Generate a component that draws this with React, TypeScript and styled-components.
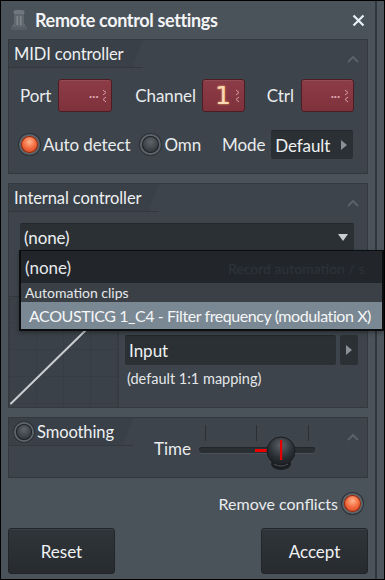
import React from "react";
import styled, { createGlobalStyle } from "styled-components";

const Global = createGlobalStyle`
  html, body { margin: 0; padding: 0; background: #000; }
  body { font-family: Lato, "Open Sans", sans-serif; }
  * { box-sizing: border-box; }
`;

const Window = styled.div`
  width: 385px;
  height: 580px;
  border: 1px solid #000;
  background: #4a525a;
  display: flex;
  color: #e9ecee;
  overflow: hidden;
`;

const Main = styled.div`
  flex: 1;
  display: flex;
  flex-direction: column;
  padding: 0 7px 0 7px;
  border-right: 2px solid #30363b;
`;

const RightEdge = styled.div`
  width: 7px;
  background: #4d555d;
`;

const TitleBar = styled.div`
  height: 38px;
  display: flex;
  align-items: center;
  gap: 6px;
  padding-left: 1px;
`;

const Title = styled.div`
  flex: 1;
  font-weight: 700;
  font-size: 18px;
  letter-spacing: -0.35px;
  color: #f3f4f5;
`;

const Close = styled.div`
  width: 24px;
  display: flex;
  justify-content: center;
  margin-right: -2px;
`;

const Panel = styled.div<{ $h: number; $row?: boolean }>`
  height: ${(p) => p.$h}px;
  background: #3d444b;
  border: 1px solid #33393f;
  display: flex;
  flex-direction: ${(p) => (p.$row ? "row" : "column")};
  align-items: ${(p) => (p.$row ? "flex-start" : "stretch")};
  position: relative;
`;

const Header = styled.div`
  height: 28px;
  display: flex;
  align-items: stretch;
  flex: none;
`;

const Tab = styled.div<{ $w: number }>`
  width: ${(p) => p.$w}px;
  height: 28px;
  flex: none;
  background: linear-gradient(to bottom right, #394047 50%, transparent 50.5%) right / 10px 100% no-repeat,
    linear-gradient(#394047, #394047) left / calc(100% - 10px) 100% no-repeat;
  border-bottom: 1px solid #32383e;
  display: flex;
  align-items: center;
  gap: 3px;
  padding-left: 5px;
  font-size: 16.5px;
  letter-spacing: -0.1px;
  color: #eef0f2;
`;

const Chevron = styled.div`
  position: absolute;
  right: 8px;
  top: 7px;
`;

const Gap = styled.div<{ $h: number }>`
  height: ${(p) => p.$h}px;
  flex: none;
`;

const Row = styled.div<{ $pl?: number }>`
  display: flex;
  align-items: center;
  padding-left: ${(p) => p.$pl ?? 11}px;
  font-size: 17px;
  letter-spacing: -0.1px;
`;

const Label = styled.span<{ $ml?: number; $mr?: number }>`
  margin-left: ${(p) => p.$ml ?? 0}px;
  margin-right: ${(p) => p.$mr ?? 0}px;
  white-space: nowrap;
`;

const Spin = styled.div<{ $w: number }>`
  width: ${(p) => p.$w}px;
  height: 33px;
  background: linear-gradient(#8d3c46, #7e323c);
  border: 1px solid #4e1d24;
  border-radius: 3px;
  box-shadow: inset 0 1px 0 rgba(255, 255, 255, 0.08);
  display: flex;
  align-items: center;
  justify-content: flex-end;
  padding-right: 4px;
  gap: 4px;
`;

const Dashes = styled.span`
  font-size: 14px;
  line-height: 1;
  color: #dba6ad;
  letter-spacing: -0.5px;
`;

const Digit = styled.span`
  font-size: 25px;
  line-height: 1;
  color: #f7d9b3;
  font-family: "DejaVu Sans", sans-serif;
  text-shadow: 0 0 2px #ffb060;
`;

const Radio = styled.div<{ $on?: boolean; $size?: number }>`
  width: ${(p) => p.$size ?? 21}px;
  height: ${(p) => p.$size ?? 21}px;
  border-radius: 50%;
  flex: none;
  background: #5b636b;
  padding: 2px;
  box-shadow: 0 0 0 1px #2d3237;
  &::after {
    content: "";
    display: block;
    width: 100%;
    height: 100%;
    border-radius: 50%;
    background: ${(p) =>
      p.$on
        ? "radial-gradient(circle at 50% 35%, #ffb58f 0%, #f46b3e 45%, #c23a1a 100%)"
        : "radial-gradient(circle at 50% 35%, #5e6468 0%, #3a3f44 60%, #2a2e32 100%)"};
    box-shadow: inset 0 0 0 1px ${(p) => (p.$on ? "#8a2a10" : "#202427")};
  }
`;

const Select = styled.div<{ $w?: number; $h?: number }>`
  ${(p) => (p.$w ? `width: ${p.$w}px;` : "flex: 1;")}
  height: ${(p) => p.$h ?? 29}px;
  background: #2b3035;
  border-top: 1px solid #24282c;
  border-radius: 2px;
  display: flex;
  align-items: center;
  padding-left: 4px;
  padding-right: 6px;
  font-size: 17px;
  color: #eef0f2;
  justify-content: space-between;
`;

const InputRow = styled.div`
  display: flex;
  gap: 4px;
`;

const ArrowBox = styled.div`
  width: 18px;
  height: 30px;
  background: #2b3035;
  border-radius: 2px;
  display: flex;
  align-items: center;
  justify-content: center;
`;

const Popup = styled.div`
  position: absolute;
  left: 10px;
  top: 66px;
  width: 365px;
  border: 2px solid #0b0d0f;
  border-top-width: 1px;
  background: #23272c;
  z-index: 2;
  box-shadow: 0 2px 4px rgba(0, 0, 0, 0.3);
`;

const PopRow = styled.div<{ $kind: "item" | "head" | "sel" }>`
  height: ${(p) => (p.$kind === "item" ? 32 : p.$kind === "head" ? 19 : 27)}px;
  display: flex;
  align-items: center;
  padding-left: ${(p) => (p.$kind === "sel" ? 8 : 4)}px;
  font-size: ${(p) => (p.$kind === "head" ? 14 : p.$kind === "sel" ? 16 : 17)}px;
  letter-spacing: ${(p) => (p.$kind === "sel" ? "-0.42px" : "0")};
  background: ${(p) =>
    p.$kind === "item" ? "#22262b" : p.$kind === "head" ? "#3b4046" : "#7a8893"};
  color: ${(p) => (p.$kind === "sel" ? "#f4f6f7" : "#e6e9eb")};
  white-space: nowrap;
  position: relative;
`;

const Ghost = styled.span`
  position: absolute;
  left: 207px;
  top: 9px;
  font-size: 14px;
  color: #2e3338;
`;

const MapArea = styled.div`
  flex: 1;
  display: flex;
  border-top: 1px solid #33393f;
`;

const Graph = styled.div`
  width: 110px;
  border-right: 1px solid #343a40;
  background-color: #3a4148;
  background-image: linear-gradient(#363d44 1px, transparent 1px),
    linear-gradient(90deg, #363d44 1px, transparent 1px);
  background-size: 27px 27px;
  background-position: 0 -2px;
  display: flex;
  align-items: flex-end;
`;

const MapSide = styled.div`
  flex: 1;
  display: flex;
  flex-direction: column;
  padding: 38px 9px 0 6px;
  gap: 5px;
`;

const Note = styled.div`
  font-size: 14.5px;
  padding-left: 2px;
  color: #e4e7e9;
`;

const TimeGroup = styled.div`
  display: flex;
  align-items: flex-start;
  margin-left: 21px;
  margin-top: 7px;
  font-size: 17px;
`;

const TimeLabel = styled.span`
  margin-top: 13px;
`;

const SliderWrap = styled.div`
  width: 120px;
  height: 52px;
  position: relative;
  margin-left: 8px;
`;

const Track = styled.div`
  position: absolute;
  left: 0;
  right: 4px;
  top: 22px;
  height: 6px;
  border-radius: 3px;
  background: #2a2f34;
  box-shadow: inset 0 1px 0 #22262a, 0 1px 0 #4a5158;
`;

const Tick = styled.div<{ $x: number }>`
  position: absolute;
  left: ${(p) => p.$x}px;
  top: 0;
  width: 1px;
  height: 16px;
  background: #2a2f34;
`;

const RedBar = styled.div`
  position: absolute;
  left: 56px;
  top: 24px;
  width: 12px;
  height: 3px;
  background: #e00;
`;

const Knob = styled.div`
  position: absolute;
  left: 66px;
  top: 9px;
`;

const Footer = styled.div`
  display: flex;
  justify-content: flex-end;
  align-items: center;
  gap: 4px;
  font-size: 16px;
  padding-right: 5px;
  height: 22px;
`;

const Buttons = styled.div`
  display: flex;
  justify-content: space-between;
`;

const Button = styled.div`
  width: 107px;
  height: 46px;
  background: linear-gradient(#30353a, #272b30);
  border: 1px solid #22262a;
  border-radius: 3px;
  box-shadow: inset 0 1px 0 #3a4045;
  display: flex;
  align-items: center;
  justify-content: center;
  font-size: 17px;
  color: #f0f2f3;
`;

const ChevUp = () => (
  <svg width="12" height="8" viewBox="0 0 12 8">
    <path d="M1 7 L6 2 L11 7" stroke="#59616a" strokeWidth="2" fill="none" />
  </svg>
);

const RightTri = () => (
  <svg width="6" height="10" viewBox="0 0 6 10">
    <path d="M0 0 L6 5 L0 10 Z" fill="#8a9096" />
  </svg>
);

const SpinArrows = () => (
  <svg width="5" height="14" viewBox="0 0 5 14">
    <path d="M1 1 L4 3.5 L1 6 M4 8 L1 10.5 L4 13" stroke="#d7a0a8" strokeWidth="1" fill="none" />
  </svg>
);

export default function App() {
  return (
    <>
      <Global />
      <Window>
        <Main>
          <TitleBar>
            <svg width="20" height="24" viewBox="0 0 20 24">
              <rect x="4.5" y="2" width="11" height="5" rx="2.5" fill="#70777e" />
              <path d="M5 6 L15 6 L15 15 L18 20 L2 20 L5 15 Z" fill="#60676e" />
              <rect x="7.5" y="8" width="1.6" height="9" fill="#80878e" />
              <rect x="10.9" y="8" width="1.6" height="9" fill="#80878e" />
              <rect x="2" y="19" width="16" height="3" rx="1" fill="#575e65" />
            </svg>
            <Title>Remote control settings</Title>
            <Close>
              <svg width="13" height="13" viewBox="0 0 13 13">
                <path d="M1.5 1.5 L11.5 11.5 M11.5 1.5 L1.5 11.5" stroke="#e8f0f8" strokeWidth="2.2" />
              </svg>
            </Close>
          </TitleBar>

          <Panel $h={135}>
            <Header>
              <Tab $w={134}>MIDI controller</Tab>
              <Chevron>
                <ChevUp />
              </Chevron>
            </Header>
            <Gap $h={11} />
            <Row>
              <Label $mr={7}>Port</Label>
              <Spin $w={54}>
                <Dashes>···</Dashes>
                <SpinArrows />
              </Spin>
              <Label $ml={23} $mr={6}>Channel</Label>
              <Spin $w={43}>
                <Digit>1</Digit>
                <SpinArrows />
              </Spin>
              <Label $ml={22} $mr={7}>Ctrl</Label>
              <Spin $w={53}>
                <Dashes>···</Dashes>
                <SpinArrows />
              </Spin>
            </Row>
            <Gap $h={18} />
            <Row $pl={10}>
              <Radio $on />
              <Label $ml={3}>Auto detect</Label>
              <Radio style={{ marginLeft: 10 }} />
              <Label $ml={3}>Omn</Label>
              <Label $ml={21} $mr={6}>Mode</Label>
              <Select $w={82}>
                Default
                <RightTri />
              </Select>
            </Row>
          </Panel>

          <Gap $h={9} />

          <Panel $h={225}>
            <Header>
              <Tab $w={150}>Internal controller</Tab>
              <Chevron>
                <ChevUp />
              </Chevron>
            </Header>
            <Gap $h={11} />
            <Row $pl={11}>
              <Select $h={28} style={{ marginRight: 13 }}>
                (none)
                <svg width="10" height="7" viewBox="0 0 10 7">
                  <path d="M0 0 L10 0 L5 7 Z" fill="#c9ced2" />
                </svg>
              </Select>
            </Row>
            <Popup>
              <PopRow $kind="item">
                (none)
                <Ghost>Record automation / s</Ghost>
              </PopRow>
              <PopRow $kind="head">Automation clips</PopRow>
              <PopRow $kind="sel">ACOUSTICG 1_C4 - Filter frequency (modulation X)</PopRow>
            </Popup>
            <Gap $h={45} />
            <MapArea>
              <Graph>
                <svg width="110" height="110" viewBox="0 0 110 110">
                  <path d="M2 107 L107 4" stroke="#c9ced3" strokeWidth="2" strokeLinecap="round" />
                </svg>
              </Graph>
              <MapSide>
                <InputRow>
                  <Select $h={30}>Input</Select>
                  <ArrowBox>
                    <RightTri />
                  </ArrowBox>
                </InputRow>
                <Note>(default 1:1 mapping)</Note>
              </MapSide>
            </MapArea>
          </Panel>

          <Gap $h={9} />

          <Panel $h={61} $row>
            <Tab $w={124}>
              <Radio $size={20} />
              Smoothing
            </Tab>
            <Chevron>
              <ChevUp />
            </Chevron>
            <TimeGroup>
              <TimeLabel>Time</TimeLabel>
              <SliderWrap>
                <Track />
                <Tick $x={6} />
                <Tick $x={57} />
                <Tick $x={109} />
                <RedBar />
                <Knob>
                  <svg width="32" height="38" viewBox="0 0 32 38">
                    <defs>
                      <radialGradient id="kg" cx="50%" cy="30%" r="70%">
                        <stop offset="0" stopColor="#5a6168" />
                        <stop offset="0.6" stopColor="#2c3136" />
                        <stop offset="1" stopColor="#1b1e21" />
                      </radialGradient>
                    </defs>
                    <ellipse cx="16" cy="30" rx="10" ry="6" fill="#1c1f22" />
                    <circle cx="16" cy="17" r="14" fill="url(#kg)" stroke="#1a1d20" />
                    <path d="M9 30 Q16 34 23 30" stroke="#4a5157" strokeWidth="1" fill="none" />
                    <rect x="15" y="6" width="2.2" height="20" fill="#e40000" />
                  </svg>
                </Knob>
              </SliderWrap>
            </TimeGroup>
          </Panel>

          <Gap $h={14} />
          <Footer>
            Remove conflicts
            <Radio $on />
          </Footer>
          <Gap $h={14} />
          <Buttons>
            <Button>Reset</Button>
            <Button>Accept</Button>
          </Buttons>
        </Main>
        <RightEdge />
      </Window>
    </>
  );
}
